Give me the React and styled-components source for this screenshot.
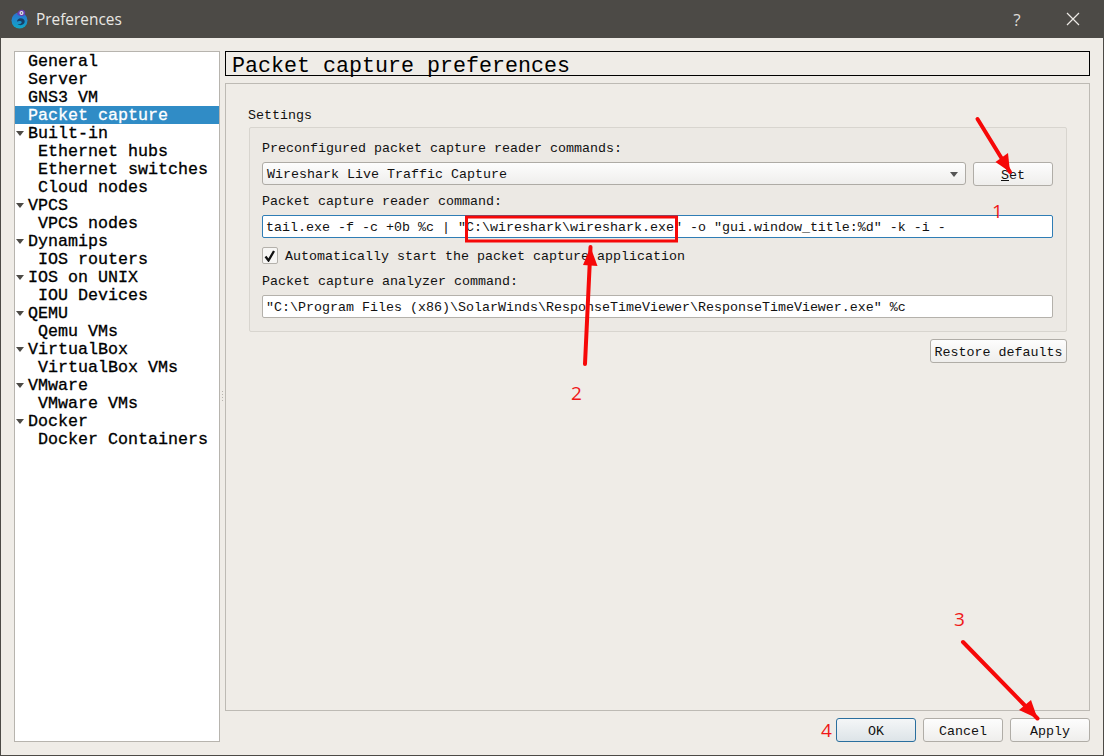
import React from 'react';
import styled, { createGlobalStyle } from 'styled-components';

const GlobalStyle = createGlobalStyle`
  html, body { margin: 0; padding: 0; background: #efece7; }
  * { box-sizing: border-box; }
`;

const MONO = `"Liberation Mono", "DejaVu Sans Mono", monospace`;

const Window = styled.div`
  position: relative;
  width: 1104px;
  height: 756px;
  display: flex;
  flex-direction: column;
  background: #efece7;
  border: 1px solid #4c4a46;
  border-top: none;
  overflow: hidden;
  font-family: ${MONO};
  font-size: 13.33px;
  color: #111;
`;

const TitleBar = styled.div`
  height: 38px;
  flex: none;
  display: flex;
  align-items: center;
  background: #4c4a46;
  color: #e9e7e3;
  font-family: "Open Sans", "Noto Sans", sans-serif;
  font-size: 15.4px;
  padding-left: 11px;
  margin: 0 -1px;
`;

const TitleText = styled.span`
  margin-left: 8px;
  margin-top: 1px;
  flex: 1;
`;

const HelpMark = styled.span`
  width: 16px;
  margin-right: 41px;
  text-align: center;
  font-size: 17px;
  color: #dedcd8;
`;

const CloseIcon = styled.svg`
  width: 14px;
  height: 14px;
  margin-right: 24px;
`;

const Body = styled.div`
  flex: 1;
  display: flex;
  padding: 13px;
  min-height: 0;
`;

const Tree = styled.ul`
  width: 206px;
  flex: none;
  margin: 0;
  padding: 0;
  list-style: none;
  background: #fff;
  border: 1px solid #b7b4ae;
`;

const TreeRow = styled.li`
  position: relative;
  height: 18px;
  line-height: 20px;
  padding-left: ${p => (p.$child ? 23 : 13)}px;
  font-size: 16.67px;
  white-space: pre;
  -webkit-text-stroke: 0.3px currentColor;
  background: ${p => (p.$selected ? '#308cc6' : 'transparent')};
  color: ${p => (p.$selected ? '#fff' : '#000')};
`;

const Caret = styled.i`
  position: absolute;
  left: 1px;
  top: 7px;
  border-left: 4px solid transparent;
  border-right: 4px solid transparent;
  border-top: 5px solid #4c4a46;
`;

const Splitter = styled.div`
  width: 5px;
  flex: none;
  display: flex;
  align-items: center;
  justify-content: center;
  &::after {
    content: '';
    width: 1px;
    height: 12px;
    background: repeating-linear-gradient(#b7b4ae 0 1px, transparent 1px 3px);
  }
`;

const Main = styled.div`
  width: 865px;
  flex: none;
  display: flex;
  flex-direction: column;
  gap: 7px;
`;

const PageTitle = styled.div`
  height: 25px;
  flex: none;
  border: 1px solid #000;
  padding: 2px 0 0 6px;
  font-size: 21.67px;
  line-height: 25px;
  color: #000;
  white-space: pre;
`;

const Panel = styled.div`
  flex: 1;
  border: 1px solid #bdbab4;
  padding: 24px 22px 0 23px;
  display: flex;
  flex-direction: column;
`;

const GroupTitle = styled.div`
  height: 16px;
  line-height: 16px;
  margin-left: -1px;
  margin-bottom: 3px;
`;

const Group = styled.div`
  background: #ece9e4;
  border: 1px solid #d8d5cf;
  border-radius: 2px;
  padding: 12px 13px 13px 12px;
  display: flex;
  flex-direction: column;
`;

const FieldLabel = styled.label`
  display: block;
  height: 16px;
  line-height: 18px;
  margin-top: ${p => p.$top || 0}px;
  margin-bottom: 6px;
  white-space: pre;
`;

const Row = styled.div`
  display: flex;
  gap: 7px;
`;

const Combo = styled.div`
  flex: 1;
  height: 23px;
  display: flex;
  align-items: center;
  justify-content: space-between;
  padding: 1px 7px 0 4px;
  border: 1px solid #aeaba5;
  border-radius: 3px;
  background: linear-gradient(#fdfdfd, #efeeec);
`;

const ComboArrow = styled.i`
  border-left: 4px solid transparent;
  border-right: 4px solid transparent;
  border-top: 5px solid #555;
`;

const Button = styled.div`
  width: ${p => p.$width || 80}px;
  height: 24px;
  flex: none;
  display: flex;
  align-items: center;
  justify-content: center;
  border: 1px solid ${p => (p.$primary ? '#2a6f9e' : '#b0ada7')};
  border-radius: 3px;
  background: ${p => (p.$primary
    ? 'linear-gradient(#f4f6f7, #dde4e8)'
    : 'linear-gradient(#fdfdfd, #efeeec)')};
  padding-top: 2px;
  white-space: pre;
`;

const SetButton = styled(Button)`
  padding-top: 3px;
`;

const Input = styled.div`
  height: 23px;
  line-height: 23px;
  padding-left: 3px;
  background: #fff;
  border: 1px solid ${p => (p.$focus ? '#2f7db5' : '#b4b1ab')};
  border-radius: 2px;
  white-space: pre;
  overflow: hidden;
`;

const CheckRow = styled.div`
  display: flex;
  gap: 7px;
  height: 17px;
  margin-top: 9px;
  white-space: pre;
`;

const CheckBox = styled.span`
  width: 16px;
  height: 17px;
  flex: none;
  display: flex;
  align-items: center;
  justify-content: center;
  background: #f7f6f4;
  border: 1px solid #b4b1ab;
  border-radius: 2px;
`;

const CheckLabel = styled.span`
  line-height: 19px;
`;

const RestoreRow = styled.div`
  display: flex;
  justify-content: flex-end;
  margin-top: 7px;
`;

const Footer = styled.div`
  height: 24px;
  flex: none;
  display: flex;
  justify-content: flex-end;
  gap: 7px;
`;

const Overlay = styled.svg`
  position: absolute;
  left: -1px;
  top: 0;
  width: 1104px;
  height: 756px;
  pointer-events: none;
`;

const Mark = styled.span`
  position: absolute;
  left: ${p => p.$x}px;
  top: ${p => p.$y}px;
  color: #f01818;
  font-family: "Open Sans", "Noto Sans", sans-serif;
  font-size: 19px;
  line-height: 20px;
`;

const tree = [
  { label: 'General' },
  { label: 'Server' },
  { label: 'GNS3 VM' },
  { label: 'Packet capture', selected: true },
  { label: 'Built-in', open: true },
  { label: 'Ethernet hubs', child: true },
  { label: 'Ethernet switches', child: true },
  { label: 'Cloud nodes', child: true },
  { label: 'VPCS', open: true },
  { label: 'VPCS nodes', child: true },
  { label: 'Dynamips', open: true },
  { label: 'IOS routers', child: true },
  { label: 'IOS on UNIX', open: true },
  { label: 'IOU Devices', child: true },
  { label: 'QEMU', open: true },
  { label: 'Qemu VMs', child: true },
  { label: 'VirtualBox', open: true },
  { label: 'VirtualBox VMs', child: true },
  { label: 'VMware', open: true },
  { label: 'VMware VMs', child: true },
  { label: 'Docker', open: true },
  { label: 'Docker Containers', child: true },
];

function Logo() {
  return (
    <svg width="17" height="20" viewBox="0 0 17 20">
      <defs>
        <linearGradient id="logoBody" x1="0" y1="0" x2="0" y2="1">
          <stop offset="0" stopColor="#2c6fd0" />
          <stop offset="1" stopColor="#10a8c8" />
        </linearGradient>
      </defs>
      <circle cx="8.500" cy="11.500" r="8" fill="url(#logoBody)" />
      <path d="M6 12.500c0-2 1.700-3.300 3.700-3.300 2.300 0 4 1.500 4 3.400 0 2.100-1.900 3.600-4.200 3.600-1.200 0-2.300-.4-3-1.200 1 .3 2.300.2 3.200-.3.800-.5 1.200-1.300.9-2-.4-.8-1.500-1-2.500-.6-.8.200-1.400.7-2.100.4z" fill="#173f66" />
      <path d="M6 5C6.800 2 9.200.4 11.500.8c2.100.4 3.200 2.200 2.600 4-.6 1.800-2.300 2.700-4.300 2.300C8 6.800 6.800 5.900 6 5z" fill="#6a3fb0" />
      <circle cx="10.500" cy="4" r="2" fill="#e8e8f0" />
      <circle cx="10.500" cy="4" r=".8" fill="#3b3b55" />
    </svg>
  );
}

function Arrow({ from, to, a, b }) {
  return (
    <g>
      <line x1={from[0]} y1={from[1]} x2={to[0]} y2={to[1]} stroke="#f60808" strokeWidth="4" strokeLinecap="round" />
      <polygon points={`${to[0]},${to[1]} ${a[0]},${a[1]} ${b[0]},${b[1]}`} fill="#f60808" />
    </g>
  );
}

export default function App() {
  return (
    <>
      <GlobalStyle />
      <Window>
        <TitleBar>
          <Logo />
          <TitleText>Preferences</TitleText>
          <HelpMark>?</HelpMark>
          <CloseIcon viewBox="0 0 14 14">
            <path d="M1 1l12 12M13 1L1 13" stroke="#eceae6" strokeWidth="1.200" fill="none" />
          </CloseIcon>
        </TitleBar>
        <Body>
          <Tree>
            {tree.map(item => (
              <TreeRow key={item.label} $child={item.child} $selected={item.selected}>
                {item.open && <Caret />}
                {item.label}
              </TreeRow>
            ))}
          </Tree>
          <Splitter />
          <Main>
            <PageTitle>Packet capture preferences</PageTitle>
            <Panel>
              <GroupTitle>Settings</GroupTitle>
              <Group>
                <FieldLabel>Preconfigured packet capture reader commands:</FieldLabel>
                <Row>
                  <Combo>
                    Wireshark Live Traffic Capture
                    <ComboArrow />
                  </Combo>
                  <SetButton><span><u>S</u>et</span></SetButton>
                </Row>
                <FieldLabel $top={7}>Packet capture reader command:</FieldLabel>
                <Input $focus>tail.exe -f -c +0b %c | "C:\wireshark\wireshark.exe" -o "gui.window_title:%d" -k -i -</Input>
                <CheckRow>
                  <CheckBox>
                    <svg width="12" height="12" viewBox="0 0 12 12">
                      <path d="M1.500 6.500L4.500 10.500L10 1" stroke="#111" strokeWidth="2.300" fill="none" />
                    </svg>
                  </CheckBox>
                  <CheckLabel>Automatically start the packet capture application</CheckLabel>
                </CheckRow>
                <FieldLabel $top={9}>Packet capture analyzer command:</FieldLabel>
                <Input>"C:\Program Files (x86)\SolarWinds\ResponseTimeViewer\ResponseTimeViewer.exe" %c</Input>
              </Group>
              <RestoreRow>
                <Button $width={137}>Restore defaults</Button>
              </RestoreRow>
            </Panel>
            <Footer>
              <Button $primary>OK</Button>
              <Button>Cancel</Button>
              <Button>Apply</Button>
            </Footer>
          </Main>
        </Body>
        <Overlay viewBox="0 0 1104 756">
          <rect x="466.500" y="217" width="210" height="24" fill="none" stroke="#f60808" strokeWidth="3" />
          <Arrow from={[977.5, 119]} to={[1010, 172]} a={[995.5, 162]} b={[1008, 153]} />
          <Arrow from={[585, 364]} to={[590.500, 247]} a={[583, 265]} b={[597.500, 266]} />
          <Arrow from={[963, 642]} to={[1037.500, 718.500]} a={[1019, 710]} b={[1031, 700]} />
        </Overlay>
        <Mark $x={991} $y={201}>1</Mark>
        <Mark $x={570} $y={383}>2</Mark>
        <Mark $x={953} $y={609}>3</Mark>
        <Mark $x={820} $y={720}>4</Mark>
      </Window>
    </>
  );
}
